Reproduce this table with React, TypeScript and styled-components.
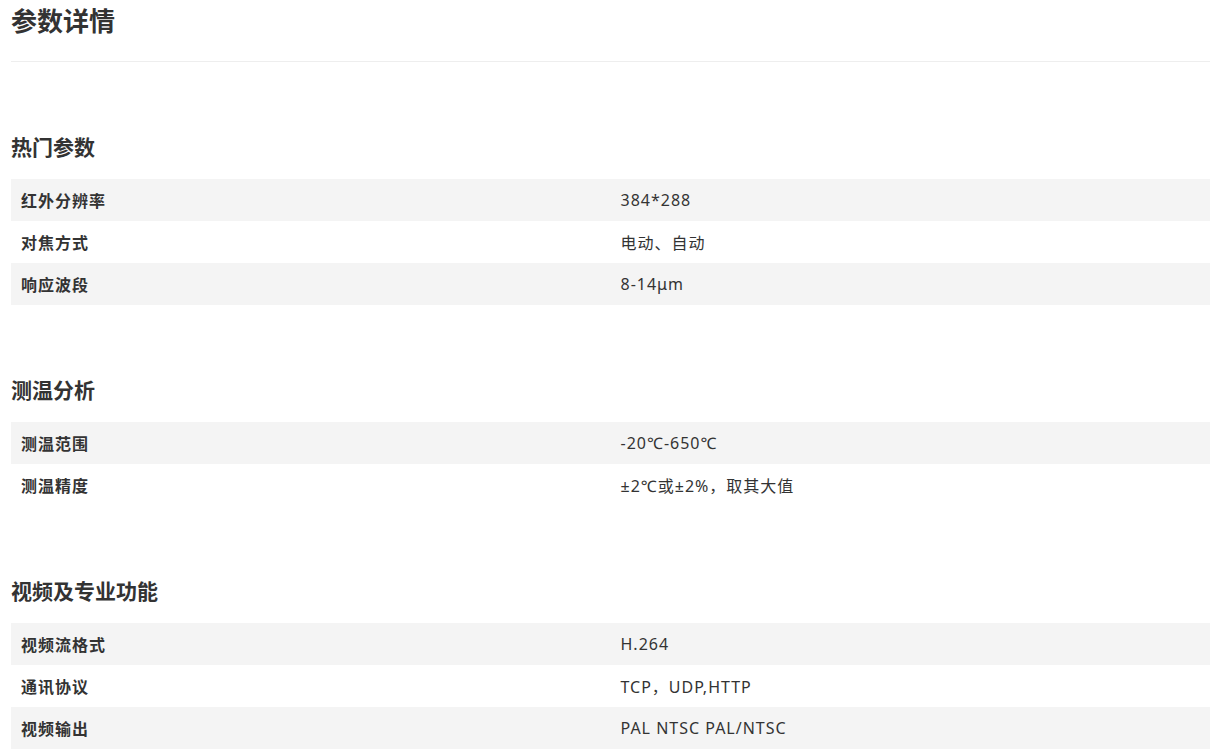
import React from "react";
import styled, { createGlobalStyle } from "styled-components";

const GlobalStyle = createGlobalStyle`
  html, body {
    margin: 0;
    padding: 0;
    background: #fff;
  }
  body {
    font-family: "Microsoft YaHei", "Noto Sans CJK SC", "Noto Sans", sans-serif;
    color: #333;
  }
`;

type Row = { name: string; value: string };
type Group = { title: string; rows: Row[] };

const groups: Group[] = [
  {
    title: "热门参数",
    rows: [
      { name: "红外分辨率", value: "384*288" },
      { name: "对焦方式", value: "电动、自动" },
      { name: "响应波段", value: "8-14μm" },
    ],
  },
  {
    title: "测温分析",
    rows: [
      { name: "测温范围", value: "-20℃-650℃" },
      { name: "测温精度", value: "±2℃或±2%，取其大值" },
    ],
  },
  {
    title: "视频及专业功能",
    rows: [
      { name: "视频流格式", value: "H.264" },
      { name: "通讯协议", value: "TCP，UDP,HTTP" },
      { name: "视频输出", value: "PAL NTSC PAL/NTSC" },
    ],
  },
];

const App = () => {
  return (
    <Page>
      <GlobalStyle />
      <Title>参数详情</Title>
      {groups.map((g) => (
        <Section key={g.title}>
          <SectionTitle>{g.title}</SectionTitle>
          <Table>
            {g.rows.map((r, i) => (
              <TableRow key={r.name} $striped={i % 2 === 0}>
                <Label>{r.name}</Label>
                <Value>{r.value}</Value>
              </TableRow>
            ))}
          </Table>
        </Section>
      ))}
    </Page>
  );
};

const Page = styled.div`
  padding-left: 11px;
  width: 1199px;
`;

const Title = styled.h2`
  margin: 0;
  font-size: 26px;
  line-height: 40px;
  font-weight: bold;
  color: #333;
  padding-bottom: 21px;
  border-bottom: 1px solid #eee;
`;

const Section = styled.section`
  margin-top: 69px;
`;

const SectionTitle = styled.h3`
  margin: 0 0 18px;
  font-size: 21px;
  line-height: 30px;
  font-weight: bold;
  color: #333;
`;

const Table = styled.div`
  display: flex;
  flex-direction: column;
`;

const TableRow = styled.div<{ $striped: boolean }>`
  display: grid;
  grid-template-columns: 1fr 1fr;
  height: 42px;
  align-items: center;
  background: ${(p) => (p.$striped ? "#f4f4f4" : "#fff")};
`;

const Label = styled.div`
  padding: 0 10px;
  font-size: 16px;
  letter-spacing: 1px;
  font-weight: bold;
  color: #333;
`;

const Value = styled.div`
  padding: 0 10px;
  font-family: "Noto Sans", "Noto Sans CJK SC", sans-serif;
  font-size: 16px;
  letter-spacing: 1px;
  color: #333;
`;

export default App;
